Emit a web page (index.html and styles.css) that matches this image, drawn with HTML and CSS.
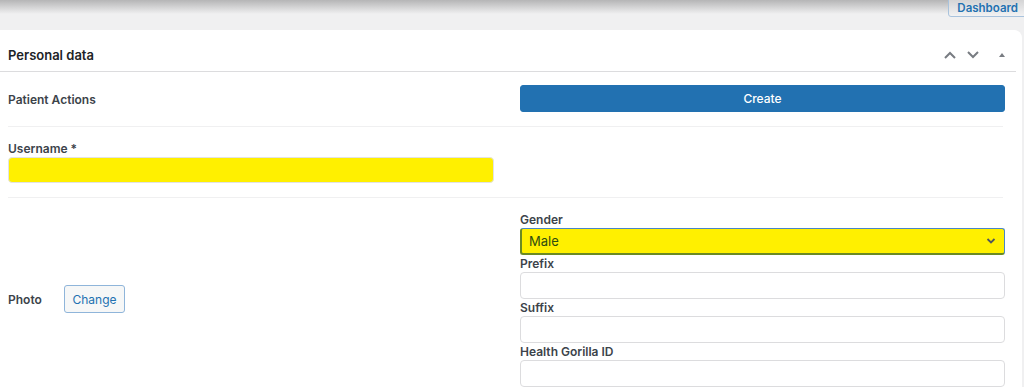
FILE: index.html
```html
<!DOCTYPE html>
<html lang="en">
<head>
<meta charset="utf-8">
<title>Personal data</title>
<link rel="stylesheet" href="styles.css">
</head>
<body>
<div class="topbar">
  <div class="top-shadow"></div>
  <button class="dash-btn">Dashboard</button>
</div>
<section class="panel">
  <header class="panel-head">
    <h2 class="panel-title">Personal data</h2>
    <div class="panel-tools">
      <svg class="tool" width="14" height="10" viewBox="0 0 14 10"><path d="M2 8 L7 3 L12 8" fill="none" stroke="#787c82" stroke-width="2"/></svg>
      <svg class="tool" width="14" height="10" viewBox="0 0 14 10"><path d="M2 2 L7 7 L12 2" fill="none" stroke="#787c82" stroke-width="2"/></svg>
      <svg class="tool tri" width="10" height="10" viewBox="0 0 10 10"><path d="M2 7 L5 3 L8 7 Z" fill="#787c82"/></svg>
    </div>
  </header>
  <div class="row row-actions">
    <div class="col"><span class="label">Patient Actions</span></div>
    <div class="col"><button class="btn-primary">Create</button></div>
  </div>
  <div class="row">
    <div class="col">
      <label class="label block">Username *</label>
      <div class="input yellow"></div>
    </div>
    <div class="col"></div>
  </div>
  <div class="row row-last">
    <div class="col photo-col">
      <span class="label photo-label">Photo</span>
      <button class="btn-secondary">Change</button>
    </div>
    <div class="col">
      <label class="label block">Gender</label>
      <div class="select">
        <span class="select-value">Male</span>
        <svg width="10" height="8" viewBox="0 0 10 8"><path d="M1.5 2 L5 5.5 L8.5 2" fill="none" stroke="#50575e" stroke-width="1.8"/></svg>
      </div>
      <label class="label block">Prefix</label>
      <div class="input"></div>
      <label class="label block">Suffix</label>
      <div class="input"></div>
      <label class="label block">Health Gorilla ID</label>
      <div class="input"></div>
    </div>
  </div>
</section>
</body>
</html>
```

FILE: styles.css
```css
* { box-sizing: border-box; }
html, body { margin: 0; padding: 0; }
body {
  background: #f0f0f1;
  font-family: Inter, "Noto Sans", "Liberation Sans", sans-serif;
  color: #1d2327;
  overflow: hidden;
  height: 387px;
}
.topbar {
  position: relative;
  height: 30px;
  display: flex;
  justify-content: flex-end;
  align-items: flex-start;
}
.top-shadow {
  position: absolute;
  left: 0; right: 0; top: 0;
  height: 14px;
  background: linear-gradient(#b5b5b6, #f0f0f1);
  pointer-events: none;
  z-index: 1;
}
.dash-btn {
  position: relative;
  z-index: 2;
  margin-top: -7px;
  margin-right: -4px;
  height: 24px;
  padding: 6px 9px 0 8px;
  border: 1px solid #a9c3dd;
  border-radius: 3px;
  background: linear-gradient(#c9c9ca, #f2f2f3);
  color: #2271b1;
  font-family: inherit;
  font-size: 11.5px;
  font-weight: 600;
  line-height: 16px;
}
.panel {
  background: #fff;
  margin-right: 2px;
  border-top-right-radius: 8px;
  height: 357px;
}
.panel-head {
  height: 42px;
  margin-right: 6px;
  border-bottom: 1px solid #dcdcde;
  display: flex;
  align-items: center;
  justify-content: space-between;
  padding-left: 8px;
  padding-top: 8px;
}
.panel-title {
  margin: 0;
  font-size: 13px;
  font-weight: 600;
  color: #1d2327;
}
.panel-tools {
  display: flex;
  align-items: center;
  gap: 9px;
  padding-right: 9px;
}
.tool { display: block; }
.tri { margin-left: 8px; }
.row {
  display: grid;
  grid-template-columns: 486px 485px;
  column-gap: 26px;
  margin-left: 8px;
  margin-right: 19px;
  padding: 13px 0 14px;
  border-bottom: 1px solid #f0f0f1;
}
.row-actions { align-items: center; padding: 13px 0 14px; }
.row-actions .label { position: relative; top: -1px; }
.row-last { border-bottom: none; padding-top: 13px; align-items: center; }
.label {
  font-size: 12px;
  font-weight: 600;
  color: #3c434a;
  line-height: 17px;
}
.block { display: block; }
.btn-primary {
  display: block;
  width: 100%;
  height: 27px;
  border: 1px solid #2271b1;
  border-radius: 3px;
  background: #2271b1;
  color: #fff;
  font-family: inherit;
  font-size: 12px;
  font-weight: 500;
}
.input {
  height: 27px;
  border: 1px solid #dcdcde;
  border-radius: 4px;
  background: #fff;
}
.input.yellow {
  height: 26px;
  background: #fff000;
  border-color: #e2e2e4;
}
.photo-col {
  display: flex;
  align-items: center;
}
.photo-label { width: 56px; }
.btn-secondary {
  height: 28px;
  width: 61px;
  border: 1px solid #8fb5da;
  border-radius: 3px;
  background: #f6f7f7;
  color: #2271b1;
  font-family: inherit;
  font-size: 12px;
  font-weight: 400;
  padding: 0;
}
.select {
  height: 27px;
  display: flex;
  align-items: center;
  justify-content: space-between;
  background: #fff000;
  border: 1px solid #4a86c5;
  border-left: 2px solid #6b8a24;
  border-bottom: 2px solid #6b8a24;
  border-radius: 3px;
  padding: 0 8px 0 7px;
}
.select-value {
  font-size: 13px;
  color: #2f4d10;
  line-height: 17px;
}
```
